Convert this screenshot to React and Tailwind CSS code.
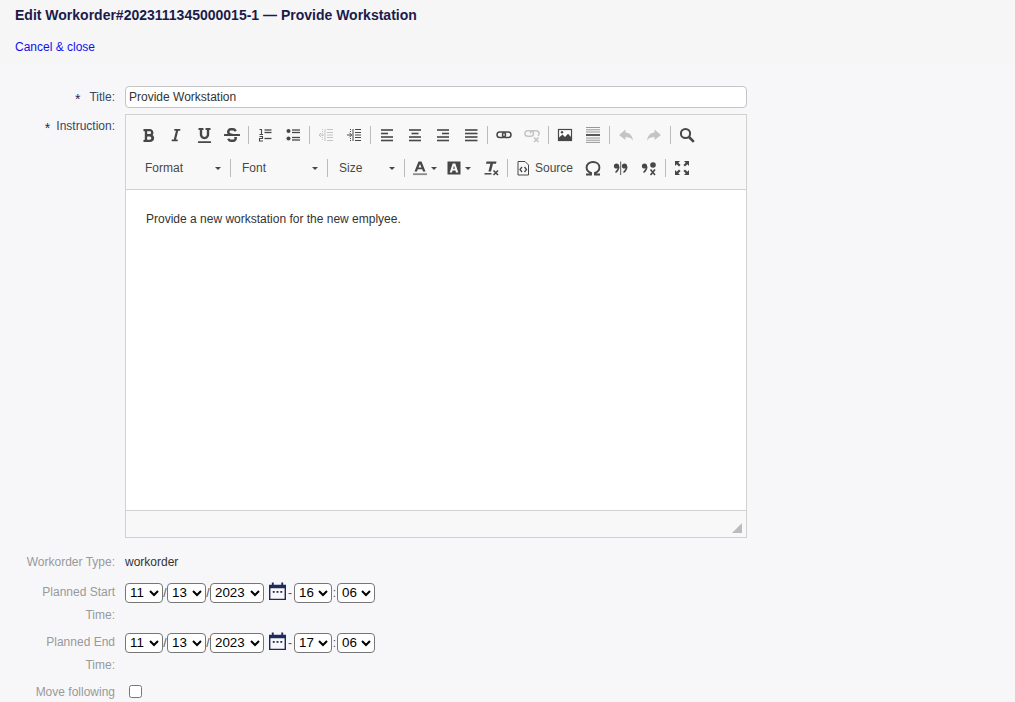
import React from 'react';
import { FaBold, FaItalic, FaUnderline, FaStrikethrough } from 'react-icons/fa';

const Svg = ({ children, className = 'text-[#474747]' }) => (
  <svg viewBox="0 0 16 16" width="16" height="16" fill="none" stroke="currentColor" className={className}>
    {children}
  </svg>
);

const Lines = ({ rows }) => rows.map(([x1, x2, y, w], i) => (
  <path key={i} d={`M${x1} ${y}H${x2}`} strokeWidth={w || 1.6} />
));

// iconos de la barra del editor
const icons = {
  bold: <FaBold size={15} className="text-[#474747]" />,
  italic: <FaItalic size={14} className="text-[#474747]" />,
  underline: <FaUnderline size={15} className="text-[#474747]" />,
  strike: <FaStrikethrough size={16} className="text-[#474747]" />,
  ol: (
    <Svg>
      <path d="M2.5 2.5H4.5V7.5M2.5 7.5H6" strokeWidth="1.1" />
      <path d="M2.5 9.5H5.5V11.5H2.5V14H6" strokeWidth="1.1" />
      <Lines rows={[[7.5, 14.5, 3, 1.3], [7.5, 14.5, 5.5, 1.3], [7.5, 14.5, 11.5, 1.3]]} />
    </Svg>
  ),
  ul: (
    <Svg>
      <circle cx="3.5" cy="4" r="2" fill="currentColor" stroke="none" />
      <circle cx="3.5" cy="11.5" r="2" fill="currentColor" stroke="none" />
      <Lines rows={[[7, 15, 3, 1.3], [7, 15, 5.5, 1.3], [7, 15, 10.5, 1.3], [7, 15, 13, 1.3]]} />
    </Svg>
  ),
  outdent: (
    <Svg className="text-[#c4c4c4]">
      <path d="M4.5 2V14" strokeWidth="1" strokeDasharray="1 1" />
      <path d="M7 2V14" strokeWidth="1" />
      <path d="M6 8H1M3.2 5.8 1 8l2.2 2.2" strokeWidth="1" />
      <Lines rows={[[9, 15, 2.5, 1], [9, 15, 5.5, 1], [9, 15, 8, 1], [9, 15, 10.5, 1], [9, 15, 13.5, 1]]} />
    </Svg>
  ),
  indent: (
    <Svg>
      <path d="M4.5 2V5M4.5 11V14" strokeWidth="1" strokeDasharray="1 1" />
      <path d="M7 2V14" strokeWidth="1" />
      <path d="M1 8H5.5M3.5 5.8 5.7 8l-2.2 2.2" strokeWidth="1" />
      <Lines rows={[[9, 15, 2.5, 1], [9, 15, 5.5, 1], [9, 15, 8, 1], [9, 15, 10.5, 1], [9, 15, 13.5, 1]]} />
    </Svg>
  ),
  left: <Svg><Lines rows={[[2, 14, 3], [2, 9, 6.5], [2, 14, 10], [2, 14, 13.5]]} /></Svg>,
  center: <Svg><Lines rows={[[2, 14, 3], [4.5, 11.5, 6.5], [2, 14, 10], [2, 14, 13.5]]} /></Svg>,
  right: <Svg><Lines rows={[[2, 14, 3], [7, 14, 6.5], [2, 14, 10], [2, 14, 13.5]]} /></Svg>,
  justify: <Svg><Lines rows={[[2, 14.5, 3], [2, 14.5, 6.5], [2, 14.5, 10], [2, 14.5, 13.5]]} /></Svg>,
  link: (
    <Svg>
      <rect x="1" y="5" width="8.5" height="5.6" rx="2.8" strokeWidth="1.5" />
      <rect x="6.5" y="5" width="8.5" height="5.6" rx="2.8" strokeWidth="1.5" />
    </Svg>
  ),
  unlink: (
    <Svg className="text-[#c4c4c4]">
      <rect x="1" y="3.7" width="8.5" height="5.6" rx="2.8" strokeWidth="1.5" />
      <path d="M6.5 6.5C6.5 5 7.5 3.7 9 3.7H12.2C13.8 3.7 15 5 15 6.5 15 7.5 14.5 8.3 14 8.8" strokeWidth="1.5" />
      <path d="M10 10.5 14.5 15M14.5 10.5 10 15" strokeWidth="1.6" />
    </Svg>
  ),
  image: (
    <Svg>
      <rect x="1.5" y="2.5" width="13" height="11" strokeWidth="1.2" fill="#fff" />
      <path d="M2 13V10.5L5.5 7.5 8 10 11 6.8 14 10V13Z" fill="currentColor" stroke="none" />
      <circle cx="5" cy="5.2" r="1.2" fill="currentColor" stroke="none" />
    </Svg>
  ),
  hr: (
    <Svg>
      <g className="text-[#8c8c8c]">
        <Lines rows={[[1, 15, 0.5, 0.9], [1, 15, 2.8, 0.9], [1, 15, 5, 0.9], [1, 15, 11, 0.9], [1, 15, 13.2, 0.9], [1, 15, 15.4, 0.9]]} />
      </g>
      <Lines rows={[[1, 15, 8, 1.8]]} />
    </Svg>
  ),
  undo: (
    <Svg className="text-[#c4c4c4]">
      <path d="M7.5 2.5 1 8l6.5 5V10c3 0 5.5.8 7.5 3.5C14.5 9 12 5.8 7.5 5.5Z" fill="currentColor" stroke="none" />
    </Svg>
  ),
  redo: (
    <Svg className="text-[#c4c4c4]">
      <path d="M8.5 2.5 15 8l-6.5 5V10c-3 0-5.5.8-7.5 3.5C1.5 9 4 5.8 8.5 5.5Z" fill="currentColor" stroke="none" />
    </Svg>
  ),
  search: (
    <Svg>
      <circle cx="6.5" cy="6.5" r="4.6" strokeWidth="2" />
      <path d="M10 10 14.8 14.8" strokeWidth="2.6" />
    </Svg>
  ),
  textColor: (
    <Svg>
      <path fillRule="evenodd" d="M6.5 1.5H9.5L13.5 11.5H11L10.2 9.3H5.8L5 11.5H2.5ZM8 4 6.5 7.5H9.5Z" fill="currentColor" stroke="none" />
      <path d="M1 14.2H15" strokeWidth="1.8" stroke="#8a8a8a" />
    </Svg>
  ),
  bgColor: (
    <Svg>
      <path fillRule="evenodd" d="M1.5 1.5H14.5V14.5H1.5ZM6.7 3.5 3.7 12.5H6L6.6 10.5H9.4L10 12.5H12.3L9.3 3.5ZM8 5.8 8.9 8.7H7.1Z" fill="currentColor" stroke="none" />
    </Svg>
  ),
  removeFormat: (
    <Svg>
      <path d="M3.5 1.5H13.5L13 3.8H10L8 11.5H5.4L7.4 3.8H3Z" fill="currentColor" stroke="none" />
      <path d="M1.5 13.8H8.5" strokeWidth="1.5" />
      <path d="M10.5 10.5 15 15M15 10.5 10.5 15" strokeWidth="1.6" />
    </Svg>
  ),
  source: (
    <Svg>
      <path d="M3 1.5H10L13.5 5V15H3Z" strokeWidth="1" />
      <path d="M7 7 5 9.5 7 12M9.5 7 11.5 9.5 9.5 12" strokeWidth="1.3" />
    </Svg>
  ),
  omega: (
    <Svg>
      <path d="M1 14.5H6V13C3 11.8 1.6 10 1.6 7.4 1.6 4 4.4 2 8 2S14.4 4 14.4 7.4C14.4 10 13 11.8 10 13V14.5H15" strokeWidth="1.9" />
    </Svg>
  ),
  quote: (
    <Svg>
      <circle cx="3.5" cy="6" r="2.6" fill="currentColor" stroke="none" />
      <path d="M5.8 6.5C5.8 9.5 4.5 11 2.5 12.5" strokeWidth="1.5" />
      <circle cx="11.5" cy="6" r="2.6" fill="currentColor" stroke="none" />
      <path d="M13.8 6.5C13.8 9.5 12.5 11 10.5 12.5" strokeWidth="1.5" />
      <path d="M7.7 1.5V15" strokeWidth="0.9" />
    </Svg>
  ),
  unquote: (
    <Svg>
      <circle cx="3.5" cy="6" r="2.6" fill="currentColor" stroke="none" />
      <path d="M5.8 6.5C5.8 9.5 4.5 11 2.5 12.5" strokeWidth="1.5" />
      <circle cx="12" cy="5" r="2.8" fill="currentColor" stroke="none" />
      <path d="M9.5 9.5 14 15M14 9.5 9.5 15" strokeWidth="1.6" />
    </Svg>
  ),
  maximize: (
    <Svg>
      <path d="M1 1H6L4.3 2.7 6.6 5 5 6.6 2.7 4.3 1 6ZM15 1V6L13.3 4.3 11 6.6 9.4 5 11.7 2.7 10 1ZM1 15V10L2.7 11.7 5 9.4 6.6 11 4.3 13.3 6 15ZM15 15H10L11.7 13.3 9.4 11 11 9.4 13.3 11.7 15 10Z" fill="currentColor" stroke="none" />
    </Svg>
  ),
};

const Btn = ({ icon }) => (
  <span className="w-7 h-[26px] flex items-center justify-center">{icons[icon]}</span>
);

const Sep = () => (
  <span className="w-[5px] h-[18px] flex justify-center">
    <span className="w-px h-full bg-[#bcbcbc]"></span>
  </span>
);

const Arrow = () => (
  <span className="w-0 h-0 border-x-[3px] border-x-transparent border-t-[3px] border-t-[#474747]"></span>
);

const Combo = ({ label, width }) => (
  <span className={`${width} h-[26px] pl-[9px] pr-[7px] flex items-center justify-between text-[#484848]`}>
    {label}
    <Arrow />
  </span>
);

const ColorBtn = ({ icon }) => (
  <span className="w-[34px] h-[26px] pl-[5px] flex items-center gap-[3px]">
    {icons[icon]}
    <Arrow />
  </span>
);

const Num = ({ value, width }) => (
  <select
    defaultValue={value}
    className={`${width} h-[20px] border border-[#767676] rounded-[4px] bg-white text-black text-[13.33px]`}
  >
    <option>{value}</option>
  </select>
);

const DateRow = ({ hour }) => (
  <div className="flex items-center h-[23px] text-[#555] text-[12px]">
    <Num value="11" width="w-[38px]" />
    <span className="w-[4px] text-center">/</span>
    <Num value="13" width="w-[39px]" />
    <span className="w-[4px] text-center">/</span>
    <Num value="2023" width="w-[54px]" />
    <svg viewBox="0 0 18 20" width="17" height="18" preserveAspectRatio="none" className="ml-[5px] mb-[3px] text-[#1c2a5e]" fill="currentColor">
      <path fillRule="evenodd" d="M0 3H3V0.5H5V3H13V0.5H15V3H18V20H0ZM1.5 7V18.5H16.5V7Z" />
      <rect x="4" y="10" width="2" height="2" />
      <rect x="8" y="10" width="2" height="2" />
      <rect x="12" y="10" width="2" height="2" />
    </svg>
    <span className="w-[8px] pl-[2px]">-</span>
    <Num value={hour} width="w-[38px]" />
    <span className="w-[5px] text-center">:</span>
    <Num value="06" width="w-[38px]" />
  </div>
);

const Label = ({ children, required, className = '' }) => (
  <div className={`w-[100px] shrink-0 text-right leading-[23px] ${required ? 'text-[#3a4560]' : 'text-[#999]'} ${className}`}>
    {children}
  </div>
);

const Star = ({ gap }) => (
  <span className={`inline-block translate-y-[3px] text-[#1c2a5e] text-[14px] leading-none ${gap}`}>*</span>
);

export default function App() {
  return (
    <div className="h-screen overflow-hidden bg-[#f7f7f9] text-[12px] text-[#333]" style={{ fontFamily: '"Liberation Sans", Arial, sans-serif' }}>
      {/* Cabecera */}
      <div className="h-[65px] bg-[#f6f6f6] px-[15px] pt-[8px]">
        <h1 className="text-[14px] font-bold leading-[15px] text-[#1b1b4b]">
          Edit Workorder#2023111345000015-1 — Provide Workstation
        </h1>
        <a className="block mt-[17px] leading-[14px] text-[#1010ee]">Cancel &amp; close</a>
      </div>

      <div className="pl-[15px] pt-[21px]">
        {/* Title */}
        <div className="flex gap-[10px]">
          <Label required><Star gap="mr-[9px]" />Title:</Label>
          <input
            defaultValue="Provide Workstation"
            className="w-[622px] h-[22px] bg-white border border-[#c4c4c4] rounded-[4px] px-[3px] text-[12px] text-[#333]"
          />
        </div>

        {/* Instruction */}
        <div className="flex gap-[10px] mt-[5px]">
          <Label required className="pt-px"><Star gap="mr-[6px]" />Instruction:</Label>
          <div className="w-[622px] h-[424px] border border-[#d1d1d1] flex flex-col">
            <div className="h-[75px] bg-[#f8f8f8] border-b border-[#d1d1d1] pl-[8px]">
              <div className="flex items-center mt-[7px]">
                <Btn icon="bold" /><Btn icon="italic" /><Btn icon="underline" /><Btn icon="strike" />
                <Sep />
                <Btn icon="ol" /><Btn icon="ul" />
                <Sep />
                <Btn icon="outdent" /><Btn icon="indent" />
                <Sep />
                <Btn icon="left" /><Btn icon="center" /><Btn icon="right" /><Btn icon="justify" />
                <Sep />
                <Btn icon="link" /><Btn icon="unlink" />
                <Sep />
                <Btn icon="image" /><Btn icon="hr" />
                <Sep />
                <Btn icon="undo" /><Btn icon="redo" />
                <Sep />
                <Btn icon="search" />
              </div>
              <div className="flex items-center mt-[7px] pl-[2px]">
                <Combo label="Format" width="w-[92px]" />
                <Sep />
                <Combo label="Font" width="w-[92px]" />
                <Sep />
                <Combo label="Size" width="w-[72px]" />
                <Sep />
                <ColorBtn icon="textColor" />
                <ColorBtn icon="bgColor" />
                <span className="w-[2px]"></span>
                <Btn icon="removeFormat" />
                <Sep />
                <span className="w-[69px] h-[26px] pl-[5px] flex items-center gap-[4px] text-[#484848]">
                  {icons.source}Source
                </span>
                <Btn icon="omega" /><Btn icon="quote" /><Btn icon="unquote" />
                <Sep />
                <Btn icon="maximize" />
              </div>
            </div>
            <div className="flex-1 bg-white px-[20px] pt-[21px] leading-[16px]">
              Provide a new workstation for the new emplyee.
            </div>
            <div className="h-[27px] bg-[#f8f8f8] border-t border-[#d1d1d1] flex justify-end items-end p-[4px]">
              <span className="w-0 h-0 border-l-[10px] border-l-transparent border-b-[10px] border-b-[#bcbcbc]"></span>
            </div>
          </div>
        </div>

        {/* Datos del workorder */}
        <div className="flex gap-[10px] mt-[13px]">
          <Label>Workorder Type:</Label>
          <div className="leading-[23px] text-[#333]">workorder</div>
        </div>
        <div className="flex gap-[10px] mt-[7px]">
          <Label>Planned Start Time:</Label>
          <DateRow hour="16" />
        </div>
        <div className="flex gap-[10px] mt-[4px]">
          <Label>Planned End Time:</Label>
          <DateRow hour="17" />
        </div>
        <div className="flex gap-[10px] mt-[4px]">
          <Label>Move following</Label>
          <input type="checkbox" className="mt-[4px] mb-[3px] mr-[3px] ml-[4px] w-[13px] h-[13px]" />
        </div>
      </div>
    </div>
  );
}
